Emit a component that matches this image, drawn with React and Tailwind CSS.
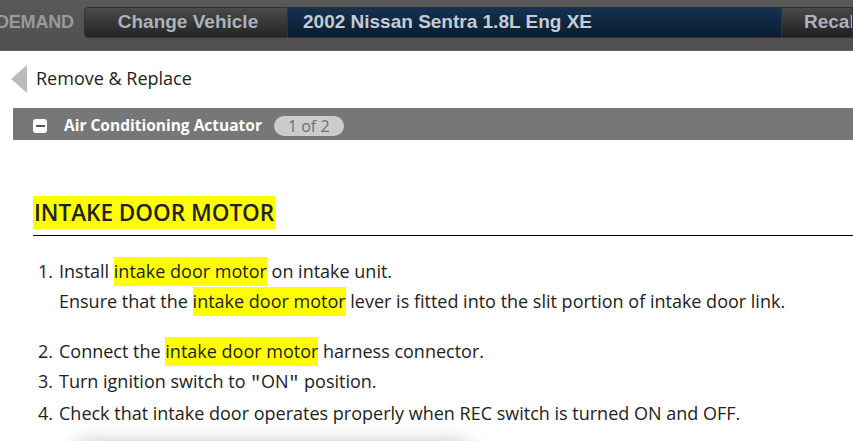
import { Fragment } from 'react'

const STEPS = [
  { n: '1.', lines: [['Install ', ['intake door motor'], ' on intake unit.'], ['Ensure that the ', ['intake door motor'], ' lever is fitted into the slit portion of intake door link.']] },
  { n: '2.', lines: [['Connect the ', ['intake door motor'], ' harness connector.']], gap: true },
  { n: '3.', lines: [['Turn ignition switch to ', { q: 'ON' }, ' position.']] },
  { n: '4.', lines: [['Check that intake door operates properly when REC switch is turned ON and OFF.']] },
]

function Mark({ children }) {
  return <span className="bg-[#ffff00] inline-block leading-[29px]">{children}</span>
}

function Line({ parts }) {
  return (
    <span className="whitespace-nowrap">
      {parts.map((p, i) => {
        if (Array.isArray(p)) return <Mark key={i}>{p[0]}</Mark>
        if (p.q) return (
          <Fragment key={i}>
            <span style={{ fontFamily: '"Liberation Mono", monospace' }}>"</span>{p.q}<span style={{ fontFamily: '"Liberation Mono", monospace' }}>"</span>
          </Fragment>
        )
        return <Fragment key={i}>{p}</Fragment>
      })}
    </span>
  )
}

export default function App() {
  return (
    <div className="w-[853px] h-[441px] overflow-hidden bg-white" style={{ fontFamily: '"Open Sans", "Noto Sans", sans-serif' }}>
      {/* Top bar */}
      <header className="h-[51px] bg-gradient-to-b from-[#595959] to-[#4f4f4f] pt-[7px] border-b border-[#666]" style={{ fontFamily: '"Liberation Sans", Arial, sans-serif' }}>
        <div className="flex h-[31px] items-stretch">
          <div className="w-[88px] flex items-center text-[18px] font-bold text-[#9a9a9a] -ml-[4px] tracking-[-0.2px]">DEMAND</div>
          <div className="w-[204px] rounded-l-[4px] bg-gradient-to-b from-[#4b4b4b] to-[#242424] border border-[#333] flex items-center justify-center pl-[4px] text-[19px] font-bold text-[#aab2ba]">
            Change Vehicle
          </div>
          <div className="w-[493px] bg-gradient-to-b from-[#143250] to-[#0b1d2f] border-y border-[#2a2a2a] flex items-center pl-[15px] text-[19px] font-bold text-[#c4ccd4]">
            2002 Nissan Sentra 1.8L Eng XE
          </div>
          <div className="flex-1 bg-gradient-to-b from-[#4b4b4b] to-[#1f1f1f] border border-[#333] flex items-center pl-[22px] text-[19px] font-bold text-[#aab2ba] whitespace-nowrap overflow-hidden">
            Recall
          </div>
        </div>
      </header>

      {/* Breadcrumb */}
      <div className="flex items-center h-[55px] pl-[11px] gap-[9px] text-[18px] text-[#222]">
        <svg width="16" height="28" viewBox="0 0 16 28"><path d="M16 0 L0 14 L16 28 Z" fill="#bbbbbb" /></svg>
        <span>Remove &amp; Replace</span>
      </div>

      {/* Section bar */}
      <div className="ml-[13px] h-[32px] bg-[#777777] flex items-center pl-[20px] mt-[2px] pt-[3px]">
        <span className="w-[14px] h-[14px] bg-white rounded-[3px] flex items-center justify-center">
          <span className="w-[9px] h-[2px] bg-[#555]" />
        </span>
        <span className="ml-[17px] text-[15.5px] font-bold text-white">Air Conditioning Actuator</span>
        <span className="ml-[12px] h-[20px] px-[14px] rounded-full bg-[#cccccc] text-[#6f6f6f] text-[16px] flex items-center">1 of 2</span>
      </div>

      {/* Content */}
      <div className="pl-[33px] pt-[56px]">
        <h2 className="inline-block bg-[#ffff00] h-[33px] px-[1px] text-[22.5px] font-semibold text-[#222] leading-[33px]">INTAKE DOOR MOTOR</h2>
        <div className="h-px bg-black mt-[6px]" />

        <ol className="mt-[20px] text-[18px] text-[#222] leading-[30px]">
          {STEPS.map((s) => (
            <li key={s.n} className={`flex ${s.gap ? 'mt-[20px]' : ''}`}>
              <span className="w-[26px] pl-[5px] shrink-0">{s.n}</span>
              <div className="flex flex-col">
                {s.lines.map((l, i) => <Line key={i} parts={l} />)}
              </div>
            </li>
          ))}
        </ol>

        <div className="relative mt-[16px] ml-[40px] w-[400px] h-[30px] rounded-full bg-[#b5b5b5] blur-[10px]" />
      </div>
    </div>
  )
}
